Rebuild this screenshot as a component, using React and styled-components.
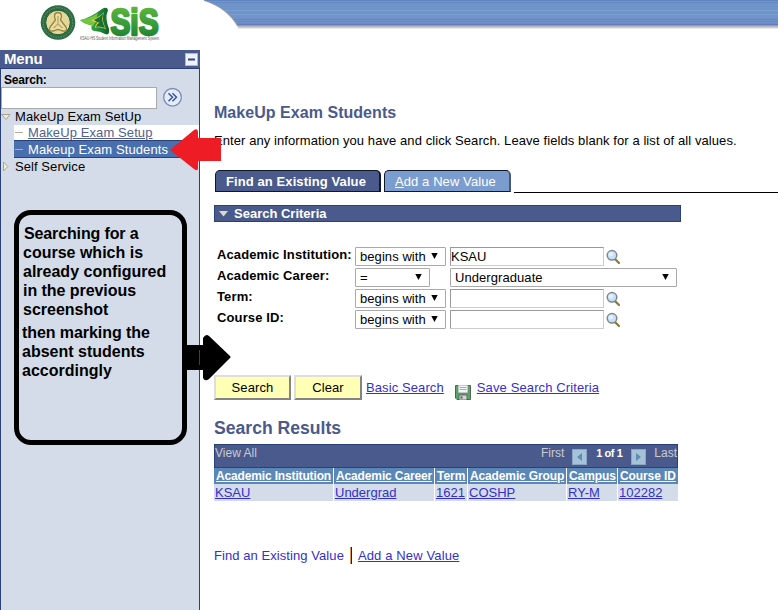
import React from "react";
import styled, { createGlobalStyle } from "styled-components";

const Global = createGlobalStyle`
  * { box-sizing: border-box; }
  body { margin: 0; background: #fff; font-family: "Liberation Sans", Arial, sans-serif; font-size: 13px; color: #000; overflow: hidden; }
  a { color: #3530cc; text-decoration: underline; }
  svg { display: block; flex: none; }
`;

const Page = styled.div`
  position: relative;
  width: 778px;
  height: 610px;
  overflow: hidden;
`;
const Header = styled.header`
  height: 50px;
  display: flex;
`;
const Body = styled.div`
  display: flex;
  height: 560px;
`;
const Sidebar = styled.aside`
  width: 200px;
  flex: none;
  background: #d4dce9;
  border: solid #294078;
  border-width: 0 1px;
`;
const MenuTitle = styled.div`
  height: 19px;
  margin: 0 -1px;
  padding: 0 2px 0 4px;
  display: flex;
  align-items: center;
  justify-content: space-between;
  background: #4a5a8c;
  border-bottom: 1px solid #294078;
  color: #fff;
  font-weight: bold;
  font-size: 15px;
  letter-spacing: -0.2px;
  line-height: 17px;
`;
const MenuName = styled.span`
  height: 18px;
`;
const SearchLabel = styled.div`
  height: 18px;
  padding: 3px 0 0 3px;
  font-size: 12px;
  font-weight: bold;
  line-height: 17px;
  letter-spacing: -0.2px;
`;
const SearchRow = styled.div`
  display: flex;
  align-items: flex-start;
  gap: 6px;
  height: 22px;
`;
const MenuInput = styled.input`
  width: 156px;
  height: 22px;
  border: 1px solid #aaa;
  background: #fff;
  padding: 0;
`;
const Folder = styled.div`
  height: ${(p) => p.$h}px;
  display: flex;
  align-items: center;
  gap: 4px;
  letter-spacing: ${(p) => p.$ls || 0}px;
  line-height: 16px;
`;
const SubItem = styled.div`
  margin-left: 13px;
  height: ${(p) => (p.$active ? 18 : 15)}px;
  padding-left: 1px;
  display: flex;
  align-items: center;
  gap: 5px;
  letter-spacing: ${(p) => p.$ls}px;
  line-height: 15px;
  white-space: nowrap;
  background: ${(p) => (p.$active ? "#4a6fae" : "#fff")};
  border: solid #294078;
  border-width: ${(p) => (p.$active ? "1px 0" : "0")};
  color: ${(p) => (p.$active ? "#fff" : "#53608f")};
  span { text-decoration: ${(p) => (p.$active ? "none" : "underline")}; }
`;
const Dash = styled.i`
  width: 8px;
  height: 1px;
  background: #b5ab9e;
`;
const Main = styled.main`
  flex: 1;
  padding-left: 14px;
`;
const Heading = styled.h1`
  margin: 0;
  padding-top: ${(p) => p.$top}px;
  font-size: ${(p) => p.$size}px;
  line-height: 20px;
  letter-spacing: ${(p) => p.$ls || 0}px;
  color: #4a5a8c;
`;
const Intro = styled.p`
  margin: 10px 0 0;
  height: 37px;
  line-height: 16px;
  white-space: nowrap;
  letter-spacing: ${(p) => p.$ls}px;
`;
const Tabs = styled.div`
  display: flex;
  height: 23px;
  padding-left: 1px;
`;
const Tab = styled.div`
  width: ${(p) => p.$w}px;
  height: 22px;
  margin-right: 3px;
  padding-left: 10px;
  line-height: 21px;
  white-space: nowrap;
  border: 1px solid #101828;
  border-right-width: 2px;
  border-radius: 5px 5px 0 0;
  color: #fff;
  background: ${(p) => (p.$active ? "#4a5a8c" : "#7b9cce")};
  border-right-color: ${(p) => (p.$active ? "#101828" : "#4b596f")};
  font-weight: ${(p) => (p.$active ? "bold" : "normal")};
  letter-spacing: ${(p) => p.$ls || 0}px;
`;
const TabLine = styled.div`
  flex: 1;
  border-bottom: 1px solid #000;
`;
const CriteriaBar = styled.div`
  width: 467px;
  height: 17px;
  margin-top: 12px;
  padding-left: 4px;
  display: flex;
  align-items: center;
  gap: 6px;
  background: #4a5a8c;
  border: 1px solid #294078;
  color: #fff;
  font-weight: bold;
`;
const Form = styled.div`
  padding: 25px 0 0 3px;
`;
const FormRow = styled.div`
  height: 21px;
  display: flex;
`;
const Label = styled.label`
  width: 138px;
  font-weight: bold;
  line-height: 15px;
  white-space: nowrap;
  letter-spacing: 0.12px;
`;
const Select = styled.div`
  width: ${(p) => p.$w}px;
  height: 19px;
  margin-right: ${(p) => p.$gap || 0}px;
  padding: 0 7px 0 4px;
  display: flex;
  align-items: center;
  justify-content: space-between;
  border: 1px solid #a9a9a9;
  border-radius: 1px;
  background: #fff;
  line-height: 17px;
  white-space: nowrap;
  letter-spacing: 0.07px;
`;
const Field = styled.div`
  width: 154px;
  height: 19px;
  margin-right: 2px;
  border: 1px solid #ccc;
  border-color: #999 #ccc #ccc #999;
  line-height: 18px;
`;
const Actions = styled.div`
  display: flex;
  align-items: center;
  height: 25px;
  margin-top: 44px;
`;
const Button = styled.button`
  width: ${(p) => p.$w}px;
  height: 25px;
  margin: 0 ${(p) => p.$gap}px 0 0;
  padding: 0;
  background: #ffffb5;
  border: 2px solid;
  border-color: #dedede #848484 #848484 #dedede;
  font: 13px "Liberation Sans", Arial, sans-serif;
  color: #000;
  letter-spacing: 0.1px;
`;
const Link = styled.a`
  white-space: nowrap;
  letter-spacing: ${(p) => p.$ls || 0}px;
  line-height: 16px;
`;
const DiskSlot = styled.span`
  margin: 10px 6px 0 11px;
`;
const ResultsBar = styled.div`
  width: 464px;
  height: 24px;
  margin-top: 6px;
  display: flex;
  justify-content: space-between;
  align-items: flex-start;
  background: #4a5a8c;
  border: 1px solid #294078;
  font-size: 12px;
  line-height: 16px;
  color: #c9ccd2;
`;
const Pager = styled.div`
  display: flex;
  align-items: flex-start;
`;
const PageButton = styled.span`
  width: 15px;
  height: 16px;
  margin: 4px 8px 0 8px;
  display: flex;
  align-items: center;
  justify-content: center;
  background: #a5c2d9;
  border: 1px solid #88a6c5;
`;
const Count = styled.b`
  color: #fff;
  font-size: 11px;
  letter-spacing: -0.45px;
  width: 28px;
  padding-left: 1px;
  white-space: nowrap;
`;
const Grid = styled.div`
  width: 464px;
  display: grid;
  grid-template-columns: 119px 100px 32px 98px 50px 60px;
  column-gap: 1px;
`;
const Head = styled.div`
  height: 16px;
  padding-left: 2px;
  background: #5b86b8;
  font-weight: bold;
  font-size: 12px;
  line-height: 16px;
  color: #fff;
  text-decoration: underline;
  white-space: nowrap;
  letter-spacing: ${(p) => p.$ls || 0}px;
`;
const Cell = styled.div`
  height: 17px;
  padding-left: 1px;
  background: #d4dce9;
  line-height: 18px;
`;
const Footer = styled.div`
  display: flex;
  align-items: center;
  margin-top: 46px;
  color: #3530cc;
  white-space: nowrap;
  letter-spacing: 0.07px;
`;
const Divider = styled.i`
  width: 2px;
  height: 17px;
  margin: 0 6px;
  background: linear-gradient(90deg, #d89a3c 50%, #123 50%);
`;
const Callout = styled.div`
  position: absolute;
  left: 14px;
  top: 210px;
  width: 173px;
  height: 235px;
  padding: 9px 0 0 5px;
  border: 5px solid #000;
  border-radius: 17px;
  font-size: 16px;
  font-weight: bold;
  line-height: 19px;
  white-space: nowrap;
`;
const Line = styled.div`
  margin-left: ${(p) => p.$x || 0}px;
  margin-top: ${(p) => p.$top || 0}px;
  letter-spacing: ${(p) => p.$ls || 0}px;
`;
const Arrow = styled.svg`
  position: absolute;
  left: ${(p) => p.$x}px;
  top: ${(p) => p.$y}px;
`;

const stripes = [
  [0, "#6184c0"], [2, "#658bc4"], [10, "#79a0d2"], [14, "#789fd0"], [19, "#6287bf"], [21, "#6389c2"], [23, "#668dc7"],
];

const Banner = () => (
  <svg width="578" height="50">
    <defs>
      <clipPath id="swoosh"><path d="M4 0C20 5 31 14 38 25H578V0Z" /></clipPath>
      <linearGradient id="shade" x1="0" y1="0" x2="0" y2="1">
        <stop offset="0" stopColor="#918f99" /><stop offset="1" stopColor="#fff" />
      </linearGradient>
    </defs>
    <rect x="38" y="25" width="540" height="4.5" fill="url(#shade)" />
    <path d="M4 0C20 5 31 14 38 26" fill="none" stroke="#9a9aa5" strokeWidth="1.6" />
    <g clipPath="url(#swoosh)">
      <rect width="578" height="25" fill="#6f94c9" />
      {stripes.map(([y, c]) => <rect key={y} y={y} width="578" height="1" fill={c} />)}
      <rect y="24" width="578" height="1" fill="#6579be" />
    </g>
  </svg>
);

const Logo = () => (
  <svg width="200" height="50">
    <defs>
      <linearGradient id="green" x1="0" y1="0" x2="0" y2="1">
        <stop offset="0" stopColor="#67bd3c" /><stop offset=".5" stopColor="#3ca03a" /><stop offset="1" stopColor="#16792f" />
      </linearGradient>
      <linearGradient id="leaf" x1="0" y1="0" x2="1" y2="0">
        <stop offset="0" stopColor="#4fb345" /><stop offset=".5" stopColor="#2f9a3b" /><stop offset="1" stopColor="#0c6230" />
      </linearGradient>
    </defs>
    <circle cx="58" cy="22.500" r="17.300" fill="#2c6b43" />
    <circle cx="58" cy="22.500" r="14.800" fill="none" stroke="#6f9a72" strokeWidth="1" strokeDasharray="1.500 1.200" />
    <circle cx="58" cy="22.500" r="12.300" fill="#e3d79a" stroke="#1d5a34" strokeWidth="1" />
    <path d="M58 12.500c3.500 0 4.500 3.500 2.500 7.500l5 6.500c2.500 3 .5 5-2.500 4.500l-5-1.500-5 1.500c-3 .5-5-1.500-2.500-4.500l5-6.500c-2-4-1-7.500 2.500-7.500Z" fill="#e9dda0" stroke="#94823f" strokeWidth="1.300" />
    <path d="M58 16v8M53.500 28l4.500-4 4.500 4" fill="none" stroke="#b9a660" strokeWidth="1.300" />
    <path d="M80 20Q90 18 102 9Q107 6 108 10Q106 15 106.500 19Q107 24 109 29Q110 36 105 34Q100 31 94 31Q90 30 92 25Q83 24 80 20Z" fill="url(#leaf)" />
    <path d="M80.500 20Q90 18.500 98 13Q96 18 97 21Q95 22 93 26Q84 24 80.500 20Z" fill="#74c541" />
    <path d="M91 20.500Q98 18 104 12Q102 17 103 21Q104 25 106 29Q98 26 95 28Q95 24 98 22.500Q94 22.500 91 20.500Z" fill="#ded43c" />
    <path d="M94 20Q100 17.500 103.500 13Q101.500 18 102.500 21Q103.500 25 105 28Q98.500 25.500 96 27Q96.500 24 99.500 22.500Q96 22 94 20Z" fill="#17713a" />
    <text x="110.500" y="34.500" fontFamily="Liberation Sans" fontWeight="bold" fontSize="36" textLength="48" lengthAdjust="spacingAndGlyphs" fill="url(#green)" stroke="url(#green)" strokeWidth="2.600" strokeLinejoin="round">SiS</text>
    <text x="80" y="39.500" fontFamily="Liberation Sans" fontSize="4.500" textLength="79" lengthAdjust="spacingAndGlyphs" fill="#555">KSAU-HS Student Information Management System</text>
  </svg>
);

const Caret = () => <svg width="7" height="8"><path d="M.3 0h6.400L3.500 6Z" fill="#000" /></svg>;

const Lens = () => (
  <svg width="16" height="19">
    <path d="M9.500 12.500l3.500 3.500" stroke="#827c38" strokeWidth="2.200" strokeLinecap="round" />
    <circle cx="6" cy="8.300" r="4.800" fill="#c5e0fb" stroke="#858585" strokeWidth="1.500" />
    <circle cx="5" cy="7.300" r="2.300" fill="#e3f1ff" />
  </svg>
);

const Disk = () => (
  <svg width="16" height="15">
    <path d="M.5.5h15v14H2L.5 13Z" fill="#55a967" stroke="#4d6754" />
    <rect x="3" y="0" width="10" height="8" fill="#f2f4f8" stroke="#777" strokeWidth=".7" />
    <path d="M4.500 2.500h7M4.500 4.500h7" stroke="#98aed4" />
    <rect x="4" y="10" width="8" height="5" fill="#d5d5d5" stroke="#555" strokeWidth=".8" />
    <rect x="5.500" y="11.500" width="2" height="2" fill="#555" />
  </svg>
);

const criteria = [
  { label: "Academic Institution:", op: "begins with", value: "KSAU" },
  { label: "Academic Career:", op: "=", choice: "Undergraduate" },
  { label: "Term:", op: "begins with", value: "" },
  { label: "Course ID:", op: "begins with", value: "" },
];

const columns = [
  ["Academic Institution", -0.15], ["Academic Career", -0.13], ["Term", 0],
  ["Academic Group", -0.13], ["Campus", -0.1], ["Course ID", -0.1],
];
const result = ["KSAU", "Undergrad", "1621", "COSHP", "RY-M", "102282"];

export default function App() {
  return (
    <Page>
      <Global />
      <Header><Logo /><Banner /></Header>
      <Body>
        <Sidebar>
          <MenuTitle>
            <MenuName>Menu</MenuName>
            <svg width="13" height="13"><rect x=".5" y=".5" width="12" height="12" fill="#eef2fa" stroke="#a9b7d0" /><path d="M3 6.500h7" stroke="#33457d" strokeWidth="2" /></svg>
          </MenuTitle>
          <SearchLabel>Search:</SearchLabel>
          <SearchRow>
            <MenuInput />
            <svg width="19" height="20"><circle cx="9.500" cy="10.300" r="8.800" fill="#e4ecfa" stroke="#7c8db6" strokeWidth="1.300" /><path d="M5.500 6.300l4 4-4 4M9.500 6.300l4 4-4 4" fill="none" stroke="#3b5598" strokeWidth="1.500" /></svg>
          </SearchRow>
          <Folder $h={16} $ls={0.07}>
            <svg width="10" height="8"><path d="M.5 1.500h8.500L5 6.500Z" fill="#eeeada" stroke="#aaa38f" /></svg>
            MakeUp Exam SetUp
          </Folder>
          <SubItem $ls={0.1}><Dash /><span>MakeUp Exam Setup</span></SubItem>
          <SubItem $active $ls={0.1}><Dash /><span>Makeup Exam Students</span></SubItem>
          <Folder $h={17} $ls={0.07}>
            <svg width="10" height="11"><path d="M2.500 1v9l4.500-4.500Z" fill="#eeeada" stroke="#aaa38f" /></svg>
            Self Service
          </Folder>
        </Sidebar>
        <Main>
          <Heading $top={53} $size={16} $ls={0.04}>MakeUp Exam Students</Heading>
          <Intro $ls={0.08}>Enter any information you have and click Search. Leave fields blank for a list of all values.</Intro>
          <Tabs>
            <Tab $active $w={166} $ls={0.09}>Find an Existing Value</Tab>
            <Tab $w={127} $ls={0.09}><u>A</u>dd a New Value</Tab>
            <TabLine />
          </Tabs>
          <CriteriaBar>
            <svg width="9" height="6"><path d="M0 0h9L4.500 5.500Z" fill="#ddd8c9" /></svg>
            Search Criteria
          </CriteriaBar>
          <Form>
            {criteria.map((c) => (
              <FormRow key={c.label}>
                <Label>{c.label}</Label>
                <Select $w={c.choice ? 75 : 91} $gap={c.choice ? 20 : 4}>{c.op}<Caret /></Select>
                {c.choice ? <Select $w={227}>{c.choice}<Caret /></Select> : <><Field>{c.value}</Field><Lens /></>}
              </FormRow>
            ))}
          </Form>
          <Actions>
            <Button $w={77} $gap={3}>Search</Button>
            <Button $w={68} $gap={4}>Clear</Button>
            <Link $ls={0.1}>Basic Search</Link>
            <DiskSlot><Disk /></DiskSlot>
            <Link $ls={0.12}>Save Search Criteria</Link>
          </Actions>
          <Heading as="h2" $top={18} $size={17.6}>Search Results</Heading>
          <ResultsBar>
            <span>View All</span>
            <Pager>
              First
              <PageButton><svg width="5" height="8"><path d="M5 0v8L0 4Z" fill="#5d8db5" /></svg></PageButton>
              <Count>1 of 1</Count>
              <PageButton><svg width="5" height="8"><path d="M0 0v8l5-4Z" fill="#5d8db5" /></svg></PageButton>
              Last
            </Pager>
          </ResultsBar>
          <Grid>
            {columns.map(([c, ls]) => <Head key={c} $ls={ls}>{c}</Head>)}
            {result.map((r) => <Cell key={r}><Link>{r}</Link></Cell>)}
          </Grid>
          <Footer>Find an Existing Value<Divider /><Link $ls={0.13}>Add a New Value</Link></Footer>
        </Main>
      </Body>
      <Callout>
        <Line $ls={-0.13}>Searching for a</Line>
        <Line $x={-1}>course which is</Line>
        <Line $x={-1}>already configured</Line>
        <Line $x={-1} $ls={-0.05}>in the previous</Line>
        <Line $x={-1}>screenshot</Line>
        <Line $x={-2} $top={4} $ls={-0.07}>then marking the</Line>
        <Line $x={-2}>absent students</Line>
        <Line $x={-2}>accordingly</Line>
      </Callout>
      <Arrow $x={186} $y={334} width="46" height="48"><path d="M0 11h17V4q3-5 6-2l21 20q1 1 0 2L23 45q-4 3-6-1V36H0Z" fill="#000" /><path d="M13.500 16v15" stroke="#294078" /></Arrow>
      <Arrow $x={169} $y={128} width="53" height="43"><path d="M1 22L25 2q4-2 4 2v6H52V33H29v7q0 4-4 1Z" fill="#ee1c24" /></Arrow>
    </Page>
  );
}
